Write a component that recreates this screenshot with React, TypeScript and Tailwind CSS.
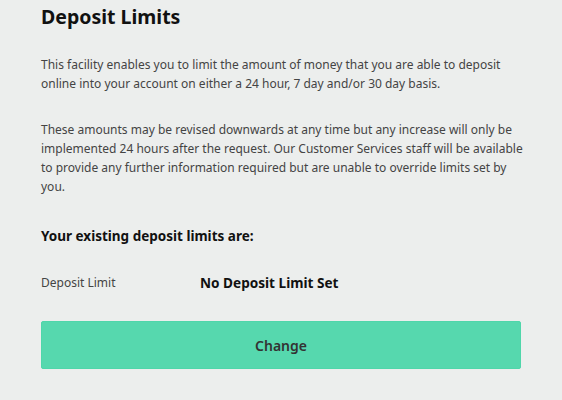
const intro = [
  "This facility enables you to limit the amount of money that you are able to deposit",
  "online into your account on either a 24 hour, 7 day and/or 30 day basis.",
];

const terms = [
  "These amounts may be revised downwards at any time but any increase will only be",
  "implemented 24 hours after the request. Our Customer Services staff will be available",
  "to provide any further information required but are unable to override limits set by",
  "you.",
];

export default function App() {
  return (
    <div className="min-h-[400px] w-full bg-[#eceeed] px-[41px] text-[#333] font-['Noto_Sans',sans-serif]">
      <h1 className="pt-[3px] text-[19.5px] font-bold leading-[28px] text-[#111]">Deposit Limits</h1>

      <div className="mt-[24px] w-[480px] space-y-[27px] text-[12px] leading-[19px] text-[#444]">
        <p>
          {intro.map((line) => (
            <span key={line} className="block whitespace-nowrap">{line}</span>
          ))}
        </p>
        <p>
          {terms.map((line) => (
            <span key={line} className="block whitespace-nowrap">{line}</span>
          ))}
        </p>
      </div>

      <h2 className="mt-[30px] text-[13.5px] font-bold leading-[20px] text-[#111]">
        Your existing deposit limits are:
      </h2>

      <div className="mt-[27px] flex items-center leading-[20px]">
        <span className="w-[159px] text-[12px] text-[#444]">Deposit Limit</span>
        <span className="text-[13.6px] font-bold text-[#111]">No Deposit Limit Set</span>
      </div>

      <button className="mt-[28px] h-[48px] w-[480px] rounded-[2px] border border-[#4fd6aa] bg-[#56d8ae] text-[14px] font-semibold text-[#333]">
        Change
      </button>
    </div>
  );
}
